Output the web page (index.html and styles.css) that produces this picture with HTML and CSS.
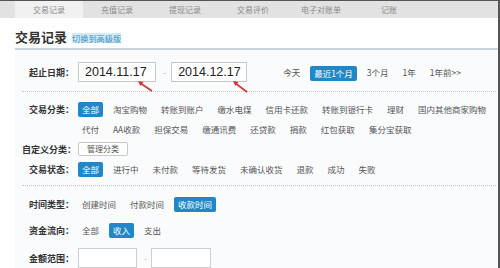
FILE: index.html
```html
<!DOCTYPE html>
<html lang="zh-CN">
<head>
    <meta charset="UTF-8">
    <title>交易记录</title>
    <link rel="stylesheet" href="styles.css">
</head>
<body>
<div class="frame">

    <ul class="tabs">
        <li class="tab active">交易记录</li>
        <li class="tab">充值记录</li>
        <li class="tab">提现记录</li>
        <li class="tab">交易评价</li>
        <li class="tab">电子对账单</li>
        <li class="tab">记账</li>
    </ul>

    <div class="content">
        <div class="head">
            <h1>交易记录</h1>
            <a class="switch">切换到高级版</a>
        </div>

        <div class="panel">
            <!-- date range -->
            <div class="section section-date">
                <div class="row">
                    <span class="label">起止日期：</span>
                    <span class="date">2014.11.17</span>
                    <span class="dash">-</span>
                    <span class="date date-end">2014.12.17</span>
                    <div class="opts quick">
                        <span class="opt">今天</span>
                        <span class="opt on">最近1个月</span>
                        <span class="opt">3个月</span>
                        <span class="opt">1年</span>
                        <span class="opt">1年前&gt;&gt;</span>
                    </div>
                </div>
            </div>

            <!-- categories / status -->
            <div class="section section-type">
                <div class="row">
                    <span class="label">交易分类：</span>
                    <div class="opts">
                        <span class="opt on">全部</span>
                        <span class="opt">淘宝购物</span>
                        <span class="opt">转账到账户</span>
                        <span class="opt">缴水电煤</span>
                        <span class="opt">信用卡还款</span>
                        <span class="opt">转账到银行卡</span>
                        <span class="opt">理财</span>
                        <span class="opt">国内其他商家购物</span>
                    </div>
                </div>
                <div class="row">
                    <span class="label"></span>
                    <div class="opts">
                        <span class="opt">代付</span>
                        <span class="opt">AA收款</span>
                        <span class="opt">担保交易</span>
                        <span class="opt">缴通讯费</span>
                        <span class="opt">还贷款</span>
                        <span class="opt">捐款</span>
                        <span class="opt">红包获取</span>
                        <span class="opt">集分宝获取</span>
                    </div>
                </div>
                <div class="row">
                    <span class="label">自定义分类：</span>
                    <div class="opts">
                        <span class="btn-ghost">管理分类</span>
                    </div>
                </div>
                <div class="row">
                    <span class="label">交易状态：</span>
                    <div class="opts">
                        <span class="opt on">全部</span>
                        <span class="opt">进行中</span>
                        <span class="opt">未付款</span>
                        <span class="opt">等待发货</span>
                        <span class="opt">未确认收货</span>
                        <span class="opt">退款</span>
                        <span class="opt">成功</span>
                        <span class="opt">失败</span>
                    </div>
                </div>
            </div>

            <!-- time / money -->
            <div class="section section-more">
                <div class="row">
                    <span class="label">时间类型：</span>
                    <div class="opts">
                        <span class="opt">创建时间</span>
                        <span class="opt">付款时间</span>
                        <span class="opt on">收款时间</span>
                    </div>
                </div>
                <div class="row">
                    <span class="label">资金流向：</span>
                    <div class="opts">
                        <span class="opt">全部</span>
                        <span class="opt on">收入</span>
                        <span class="opt">支出</span>
                    </div>
                </div>
                <div class="row row-amount">
                    <span class="label">金额范围：</span>
                    <span class="amount"></span>
                    <span class="dash">-</span>
                    <span class="amount"></span>
                </div>
            </div>

            <svg class="marks" width="485" height="60" viewBox="0 0 485 60">
                <line x1="137" y1="41" x2="125" y2="33" stroke="#d8332e" stroke-width="1.6"/>
                <polygon points="123,31 125.5,35.9 128.5,31.9" fill="#d8332e"/>
                <line x1="232" y1="42" x2="220" y2="33" stroke="#d8332e" stroke-width="1.6"/>
                <polygon points="218,31 220.5,35.9 223.5,31.9" fill="#d8332e"/>
            </svg>
        </div>
    </div>

</div>
</body>
</html>
```

FILE: styles.css
```css
body {
    margin: 0;
    background-color: #fff;
    font-family: "Noto Sans CJK SC", "Liberation Sans", sans-serif;
    color: #555;
}

.frame {
    width: 500px;
    height: 268px;
    box-sizing: border-box;
    border-right: 2px solid #555;
    overflow: hidden;
}

/* top tab bar */
.tabs {
    display: flex;
    margin: 0;
    padding: 0 0 0 15px;
    list-style: none;
    height: 17px;
    border-top: 1px solid #555;
    background-color: #e2e2e2;
}

.tab {
    width: 68px;
    text-align: center;
    font-size: 8px;
    line-height: 17px;
    color: #8a8a8a;
}
.tab.active { background-color: #f1f1f1; }

.content {
    padding-left: 15px;
}

.head {
    display: flex;
    align-items: center;
    height: 30px;
    padding-top: 7px;
    box-sizing: border-box;
}

.head h1 {
    margin: 0;
    font-size: 13px;
    line-height: 16px;
    font-weight: bold;
    color: #333;
}

.switch {
    margin-left: 5px;
    margin-top: 2px;
    font-size: 8.2px;
    line-height: 10px;
    color: #3a8ec2;
    background-color: #d4ebf2;
    text-decoration: none;
}

/* filter panel */
.panel {
    position: relative;
    height: 220px;
    border-top: 2px solid #c9d3de;
    background-color: #fafbfd;
}

.section {
    margin: 0 2px 0 7px;
    border-bottom: 1px dotted #c6cad0;
}
.section-date { padding: 12px 0 9px; }
.section-type { padding: 7px 0 6px; }
.section-more { padding: 8px 0 0; border-bottom: none; }

.section-more .row { margin-bottom: 6px; }

.row {
    display: flex;
    align-items: center;
    height: 20px;
}
.row-amount { height: 24px; }

.label {
    width: 52px;
    flex-shrink: 0;
    text-align: right;
    white-space: nowrap;
    font-size: 9px;
    font-weight: bold;
    color: #333;
}

.opts {
    display: flex;
    align-items: center;
    gap: 6px;
    margin-left: 4px;
    white-space: nowrap;
}

.opt {
    padding: 0 4px;
    font-size: 8.5px;
    line-height: 15px;
    color: #555;
}
.opt.on {
    background-color: #1f88c8;
    color: #fff;
    border-radius: 2px;
}
.quick .opt.on { margin-top: 3px; }

.btn-ghost {
    padding: 0 8px;
    font-size: 8px;
    line-height: 12px;
    color: #555;
    background-color: #fff;
    border: 1px solid #c8c8c8;
    border-radius: 2px;
}

.date {
    width: 78px;
    height: 20px;
    margin-left: 4px;
    box-sizing: border-box;
    padding-left: 6px;
    border: 1px solid #c8c8c8;
    background-color: #fff;
    font-family: "Liberation Sans", sans-serif;
    font-size: 12.5px;
    line-height: 18px;
    color: #222;
}
.date-end { width: 76px; margin-left: 0; }

.dash {
    margin: 0 5px 0 7px;
    font-size: 9px;
    color: #bbb;
}

.quick { margin-left: 32px; }

.amount {
    width: 59px;
    height: 20px;
    margin-left: 4px;
    box-sizing: border-box;
    border: 1px solid #cfcfcf;
    background-color: #fff;
}
.row-amount .dash { margin: 0 4px 0 7px; }
.row-amount .dash + .amount { margin-left: 0; width: 60px; }

.marks {
    position: absolute;
    left: 0;
    top: 0;
    pointer-events: none;
}
```
